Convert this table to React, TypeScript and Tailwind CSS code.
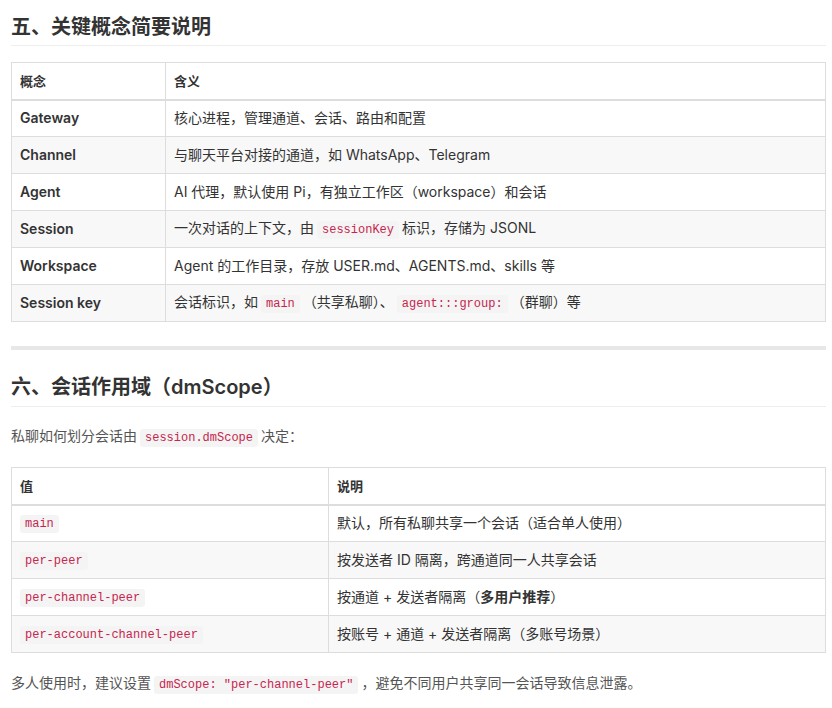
import React from 'react'

const font = { fontFamily: 'Inter, "Noto Sans CJK SC", sans-serif' }

function Code({ children }: { children: React.ReactNode }) {
  return (
    <code className="mx-[3px] rounded-[3px] bg-[#f4f4f4] px-[5px] py-[2px] font-['Liberation_Mono',monospace] text-[12px] font-normal text-[#c7254e]">
      {children}
    </code>
  )
}

const concepts: [string, React.ReactNode][] = [
  ['Gateway', '核心进程，管理通道、会话、路由和配置'],
  ['Channel', '与聊天平台对接的通道，如 WhatsApp、Telegram'],
  ['Agent', 'AI 代理，默认使用 Pi，有独立工作区（workspace）和会话'],
  ['Session', <>一次对话的上下文，由<Code>sessionKey</Code>标识，存储为 JSONL</>],
  ['Workspace', 'Agent 的工作目录，存放 USER.md、AGENTS.md、skills 等'],
  ['Session key', <>会话标识，如<Code>main</Code>（共享私聊）、<Code>agent:::group:</Code>（群聊）等</>],
]

const scopes: [string, React.ReactNode][] = [
  ['main', '默认，所有私聊共享一个会话（适合单人使用）'],
  ['per-peer', '按发送者 ID 隔离，跨通道同一人共享会话'],
  ['per-channel-peer', <>按通道 + 发送者隔离（<b className="font-semibold">多用户推荐</b>）</>],
  ['per-account-channel-peer', '按账号 + 通道 + 发送者隔离（多账号场景）'],
]

function Table({ head, rows, firstCol, codeFirst }: { head: [string, string]; rows: [string, React.ReactNode][]; firstCol: string; codeFirst?: boolean }) {
  return (
    <table className="w-full border-collapse text-[14px] text-[#333]">
      <thead>
        <tr>
          <th className={`${firstCol} h-[37px] border border-b-2 border-[#ddd] px-2 py-0 text-left text-[13px] leading-5 font-semibold`}>{head[0]}</th>
          <th className="h-[37px] border border-b-2 border-[#ddd] px-2 py-0 text-left text-[13px] leading-5 font-semibold">{head[1]}</th>
        </tr>
      </thead>
      <tbody>
        {rows.map(([k, v], i) => (
          <tr key={k} className={i % 2 === 1 ? 'bg-[#f8f8f8]' : 'bg-white'}>
            <td className={`h-[37px] border border-[#ddd] px-2 py-0 leading-5 ${codeFirst ? '' : 'font-semibold'}`}>
              {codeFirst ? <span className="-ml-[3px]"><Code>{k}</Code></span> : k}
            </td>
            <td className="h-[37px] border border-[#ddd] px-2 py-0 leading-5">{v}</td>
          </tr>
        ))}
      </tbody>
    </table>
  )
}

export default function App() {
  return (
    <div style={font} className="min-h-[708px] w-[832px] bg-white pl-[11px] pr-[6px] text-[#333]">
      <h1 className="mt-[12px] border-b border-[#eee] pb-[3px] text-[20px] leading-[30px] font-semibold">五、关键概念简要说明</h1>

      <div className="mt-[16px]">
        <Table head={['概念', '含义']} rows={concepts} firstCol="w-[154px]" />
      </div>

      <div className="mt-[24px] h-[4px] bg-[#e7e7e7]" />

      <h2 className="mt-[22px] border-b border-[#eee] pb-[4px] text-[20px] leading-[30px] font-semibold">六、会话作用域（dmScope）</h2>

      <p className="mt-[18px] text-[14px] leading-[22px] text-[#555]">
        私聊如何划分会话由<Code>session.dmScope</Code>决定：
      </p>

      <div className="mt-[18px]">
        <Table head={['值', '说明']} rows={scopes} firstCol="w-[317px]" codeFirst />
      </div>

      <p className="mt-[19px] text-[14px] leading-[22px] text-[#555]">
        多人使用时，建议设置<Code>dmScope: "per-channel-peer"</Code>，避免不同用户共享同一会话导致信息泄露。
      </p>
    </div>
  )
}
